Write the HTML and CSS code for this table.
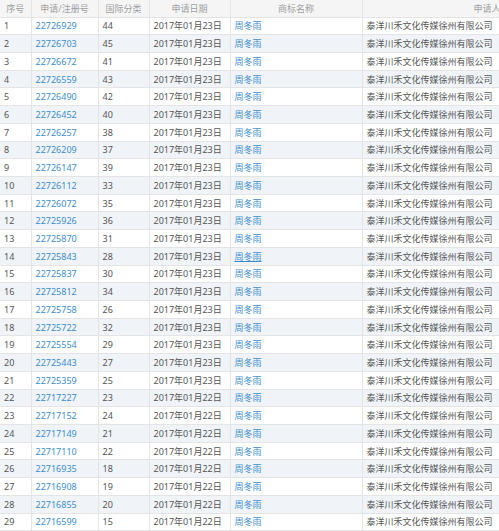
FILE: index.html
```html
<!DOCTYPE html>
<html lang="zh">
<head>
<meta charset="utf-8">
<link rel="stylesheet" href="styles.css">
</head>
<body>
<table class="tm">
<colgroup>
<col class="c-no"><col class="c-reg"><col class="c-cls"><col class="c-date"><col class="c-name"><col class="c-app">
</colgroup>
<thead>
<tr><th>序号</th><th>申请/注册号</th><th>国际分类</th><th>申请日期</th><th>商标名称</th><th>申请人</th></tr>
</thead>
<tbody>
<tr><td>1</td><td><a>22726929</a></td><td>44</td><td>2017年01月23日</td><td><a>周冬雨</a></td><td>泰洋川禾文化传媒徐州有限公司</td></tr>
<tr><td>2</td><td><a>22726703</a></td><td>45</td><td>2017年01月23日</td><td><a>周冬雨</a></td><td>泰洋川禾文化传媒徐州有限公司</td></tr>
<tr><td>3</td><td><a>22726672</a></td><td>41</td><td>2017年01月23日</td><td><a>周冬雨</a></td><td>泰洋川禾文化传媒徐州有限公司</td></tr>
<tr><td>4</td><td><a>22726559</a></td><td>43</td><td>2017年01月23日</td><td><a>周冬雨</a></td><td>泰洋川禾文化传媒徐州有限公司</td></tr>
<tr><td>5</td><td><a>22726490</a></td><td>42</td><td>2017年01月23日</td><td><a>周冬雨</a></td><td>泰洋川禾文化传媒徐州有限公司</td></tr>
<tr><td>6</td><td><a>22726452</a></td><td>40</td><td>2017年01月23日</td><td><a>周冬雨</a></td><td>泰洋川禾文化传媒徐州有限公司</td></tr>
<tr><td>7</td><td><a>22726257</a></td><td>38</td><td>2017年01月23日</td><td><a>周冬雨</a></td><td>泰洋川禾文化传媒徐州有限公司</td></tr>
<tr><td>8</td><td><a>22726209</a></td><td>37</td><td>2017年01月23日</td><td><a>周冬雨</a></td><td>泰洋川禾文化传媒徐州有限公司</td></tr>
<tr><td>9</td><td><a>22726147</a></td><td>39</td><td>2017年01月23日</td><td><a>周冬雨</a></td><td>泰洋川禾文化传媒徐州有限公司</td></tr>
<tr><td>10</td><td><a>22726112</a></td><td>33</td><td>2017年01月23日</td><td><a>周冬雨</a></td><td>泰洋川禾文化传媒徐州有限公司</td></tr>
<tr><td>11</td><td><a>22726072</a></td><td>35</td><td>2017年01月23日</td><td><a>周冬雨</a></td><td>泰洋川禾文化传媒徐州有限公司</td></tr>
<tr><td>12</td><td><a>22725926</a></td><td>36</td><td>2017年01月23日</td><td><a>周冬雨</a></td><td>泰洋川禾文化传媒徐州有限公司</td></tr>
<tr><td>13</td><td><a>22725870</a></td><td>31</td><td>2017年01月23日</td><td><a>周冬雨</a></td><td>泰洋川禾文化传媒徐州有限公司</td></tr>
<tr><td>14</td><td><a>22725843</a></td><td>28</td><td>2017年01月23日</td><td><a class="hover">周冬雨</a></td><td>泰洋川禾文化传媒徐州有限公司</td></tr>
<tr><td>15</td><td><a>22725837</a></td><td>30</td><td>2017年01月23日</td><td><a>周冬雨</a></td><td>泰洋川禾文化传媒徐州有限公司</td></tr>
<tr><td>16</td><td><a>22725812</a></td><td>34</td><td>2017年01月23日</td><td><a>周冬雨</a></td><td>泰洋川禾文化传媒徐州有限公司</td></tr>
<tr><td>17</td><td><a>22725758</a></td><td>26</td><td>2017年01月23日</td><td><a>周冬雨</a></td><td>泰洋川禾文化传媒徐州有限公司</td></tr>
<tr><td>18</td><td><a>22725722</a></td><td>32</td><td>2017年01月23日</td><td><a>周冬雨</a></td><td>泰洋川禾文化传媒徐州有限公司</td></tr>
<tr><td>19</td><td><a>22725554</a></td><td>29</td><td>2017年01月23日</td><td><a>周冬雨</a></td><td>泰洋川禾文化传媒徐州有限公司</td></tr>
<tr><td>20</td><td><a>22725443</a></td><td>27</td><td>2017年01月23日</td><td><a>周冬雨</a></td><td>泰洋川禾文化传媒徐州有限公司</td></tr>
<tr><td>21</td><td><a>22725359</a></td><td>25</td><td>2017年01月23日</td><td><a>周冬雨</a></td><td>泰洋川禾文化传媒徐州有限公司</td></tr>
<tr><td>22</td><td><a>22717227</a></td><td>23</td><td>2017年01月22日</td><td><a>周冬雨</a></td><td>泰洋川禾文化传媒徐州有限公司</td></tr>
<tr><td>23</td><td><a>22717152</a></td><td>24</td><td>2017年01月22日</td><td><a>周冬雨</a></td><td>泰洋川禾文化传媒徐州有限公司</td></tr>
<tr><td>24</td><td><a>22717149</a></td><td>21</td><td>2017年01月22日</td><td><a>周冬雨</a></td><td>泰洋川禾文化传媒徐州有限公司</td></tr>
<tr><td>25</td><td><a>22717110</a></td><td>22</td><td>2017年01月22日</td><td><a>周冬雨</a></td><td>泰洋川禾文化传媒徐州有限公司</td></tr>
<tr><td>26</td><td><a>22716935</a></td><td>18</td><td>2017年01月22日</td><td><a>周冬雨</a></td><td>泰洋川禾文化传媒徐州有限公司</td></tr>
<tr><td>27</td><td><a>22716908</a></td><td>19</td><td>2017年01月22日</td><td><a>周冬雨</a></td><td>泰洋川禾文化传媒徐州有限公司</td></tr>
<tr><td>28</td><td><a>22716855</a></td><td>20</td><td>2017年01月22日</td><td><a>周冬雨</a></td><td>泰洋川禾文化传媒徐州有限公司</td></tr>
<tr><td>29</td><td><a>22716599</a></td><td>15</td><td>2017年01月22日</td><td><a>周冬雨</a></td><td>泰洋川禾文化传媒徐州有限公司</td></tr>
</tbody>
</table>
</body>
</html>
```

FILE: styles.css
```css
html, body {
  margin: 0;
  padding: 0;
  background: #fff;
  overflow: hidden;
}
body {
  width: 499px;
  height: 531px;
}
.tm {
  border-collapse: collapse;
  table-layout: fixed;
  width: 612px;
  font-family: "Noto Sans", "Noto Sans CJK SC", sans-serif;
  font-size: 9px;
  color: #555;
}
.c-no { width: 31px; }
.c-reg { width: 67px; }
.c-cls { width: 51px; }
.c-date { width: 81px; }
.c-name { width: 132px; }
.c-app { width: 250px; }
.tm th {
  height: 16.5px;
  padding: 0;
  background: #f5f5f5;
  color: #a0a0a0;
  font-weight: normal;
  text-align: center;
  border: 1px solid #e4e4e4;
  border-top: none;
  white-space: nowrap;
}
.tm th:first-child, .tm td:first-child { border-left: none; }
.tm td {
  height: 16.72px;
  padding: 0 0 0 4px;
  border: 1px solid #e4e4e4;
  white-space: nowrap;
  overflow: hidden;
  line-height: 1;
}
.tm tbody tr:nth-child(even) td { background: #f0f4f8; }
.tm a {
  color: #3c8dcf;
  text-decoration: none;
}
.tm a.hover {
  text-decoration: underline;
}
```
